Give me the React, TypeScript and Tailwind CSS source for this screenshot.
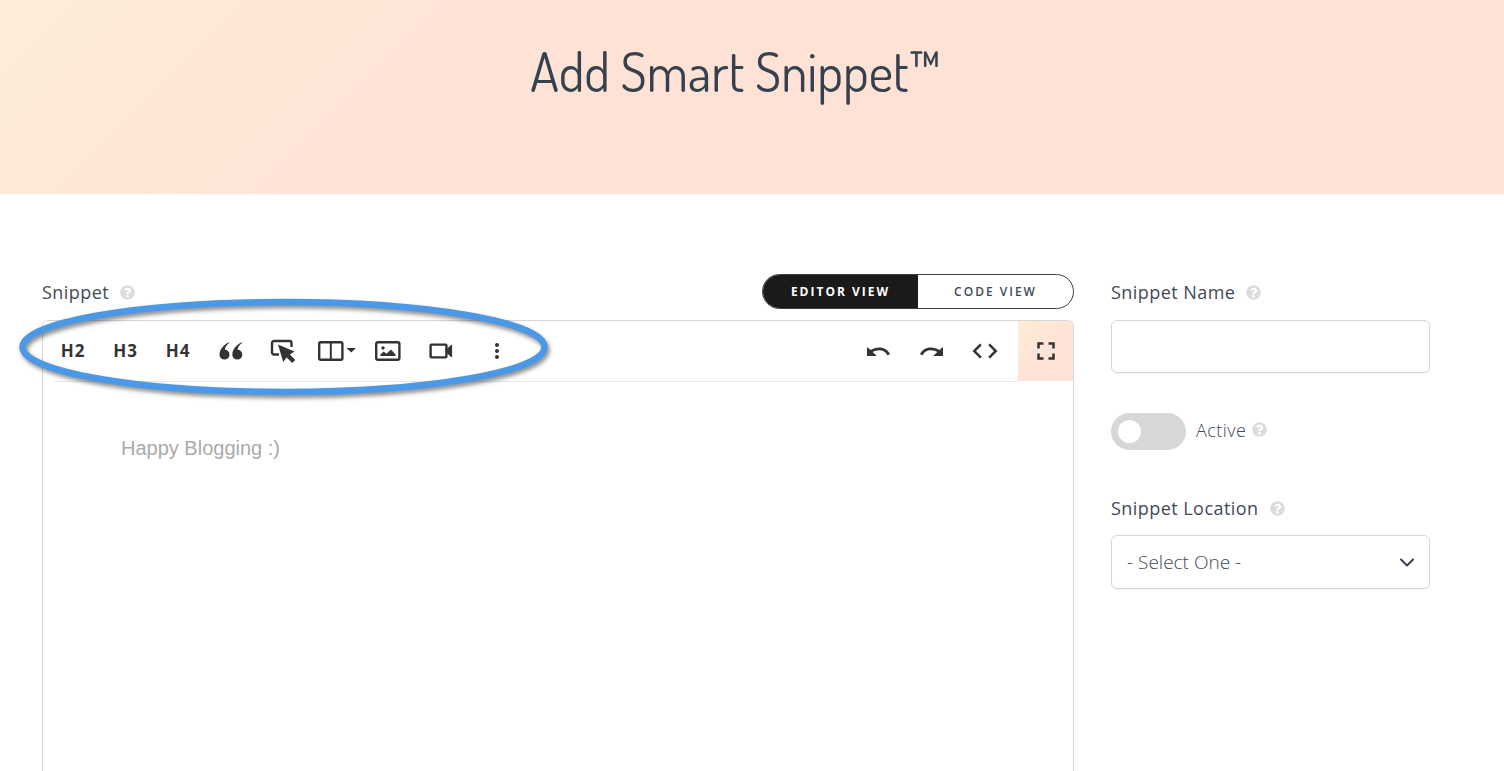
import { useState } from "react";
import type { ReactNode } from "react";
import { FaQuestionCircle } from "react-icons/fa";
import { MdCode, MdFullscreen, MdMoreVert } from "react-icons/md";

const QuoteIcon = () => (
  <svg width="24" height="18" viewBox="0 0 24 18" fill="currentColor">
    <path d="M10 .3C6.800 1.600 .5 6 .5 12.700a5 5 0 1 0 5.200-5.100c.5-2.600 2.200-5 4.700-6.800z" />
    <path d="M22.800 .3c-3.200 1.300-9.500 5.700-9.500 12.400a5 5 0 1 0 5.200-5.100c.5-2.600 2.200-5 4.700-6.800z" />
  </svg>
);

const ButtonIcon = () => (
  <svg width="26" height="24" viewBox="0 0 26 24" fill="none">
    <path d="M9 15.500H4A2 2 0 0 1 2 13.500V4A2 2 0 0 1 4 2H19.500A2 2 0 0 1 21.500 4V8" stroke="currentColor" strokeWidth="2.400" />
    <path d="M8 5.500l16.500 7-4.600 3 5.300 5.500-3 3-5.500-5.500-3.500 4.500z" fill="currentColor" />
  </svg>
);

const ColumnsIcon = () => (
  <svg width="38" height="20" viewBox="0 0 38 20" fill="none">
    <rect x="1.200" y="1.200" width="23.200" height="17.600" rx="1.500" stroke="currentColor" strokeWidth="2.400" />
    <path d="M12.800 1v18" stroke="currentColor" strokeWidth="2" />
    <path d="M28.500 7h9.500l-4.750 4.500z" fill="currentColor" />
  </svg>
);

const ImageIcon = () => (
  <svg width="26" height="20" viewBox="0 0 26 20" fill="none">
    <rect x="1.200" y="1.200" width="23.200" height="17.600" rx="1.800" stroke="currentColor" strokeWidth="2.400" />
    <circle cx="8" cy="7" r="1.700" fill="currentColor" />
    <path d="M5.500 15v-1.500l3-3 3 2.300 4.500-4.300 4.500 5V15z" fill="currentColor" />
  </svg>
);

const VideoIcon = () => (
  <svg width="24" height="16" viewBox="0 0 24 16" fill="none">
    <rect x="1.600" y="1.600" width="15.800" height="12.800" rx=".8" stroke="currentColor" strokeWidth="2.400" />
    <path d="M17.500 7l5-4.500v11l-5-4.500z" fill="currentColor" stroke="currentColor" strokeWidth="1.200" strokeLinejoin="round" />
  </svg>
);

const undoPath = "M0 0L3.600 3.100C6 1.300 8.900 .4 12.100 .4C17 .4 21.300 3 23 7.300L20.300 8.200C18.900 5 15.800 3.200 12.100 3.200C9.700 3.200 7.500 3.900 5.700 5.100L9.800 9H0Z";

const UndoIcon = () => (
  <svg width="23" height="9" viewBox="0 0 23 9" fill="currentColor">
    <path d={undoPath} />
  </svg>
);

const RedoIcon = () => (
  <svg width="23" height="9" viewBox="0 0 23 9" fill="currentColor">
    <path d={undoPath} transform="matrix(-1 0 0 1 23 0)" />
  </svg>
);

const textTools = [
  { name: "Heading 2", icon: "H2" },
  { name: "Heading 3", icon: "H3" },
  { name: "Heading 4", icon: "H4" },
  { name: "Quote", icon: <QuoteIcon /> },
  { name: "Button", icon: <ButtonIcon /> },
];

const historyTools = [
  { name: "Undo", icon: <UndoIcon /> },
  { name: "Redo", icon: <RedoIcon /> },
  { name: "Code", icon: <MdCode size={30} /> },
];

function ToolButton({ label, className, children }: { label: string; className: string; children: ReactNode }) {
  return (
    <button
      type="button"
      aria-label={label}
      className={`flex h-[60px] shrink-0 items-center justify-center text-[17px] font-bold tracking-[1px] ${className}`}
    >
      {children}
    </button>
  );
}

function Help() {
  return <FaQuestionCircle size={15} className="shrink-0 text-[#dcdcde]" />;
}

function FieldLabel({ htmlFor, children }: { htmlFor: string; children: ReactNode }) {
  return (
    <div className="flex h-6 items-center gap-[11px]">
      <label htmlFor={htmlFor} className="text-lg leading-6 tracking-wide">
        {children}
      </label>
      <Help />
    </div>
  );
}

export default function App() {
  const [view, setView] = useState("editor");
  const [active, setActive] = useState(false);

  return (
    <div className="flex min-h-screen flex-col bg-white font-['Open_Sans',sans-serif] text-[#414a57]">
      {/* Page header */}
      <header className="h-[194px] bg-[linear-gradient(135deg,#ffeed9_0%,#feead7_9%,#fde8d6_20%,#fee4d8_28%,#fde2d5_40%,#fde2d5_100%)] pt-[38px] pr-[74px] pl-[42px]">
        <h1 className="text-center font-['Dosis','Lato',sans-serif] text-[53px] leading-[68px] font-normal text-[#35414d]">
          Add Smart Snippet™
        </h1>
      </header>

      <main className="flex flex-1 gap-[37px] pt-20 pr-[74px] pl-[42px]">
        {/* Editor */}
        <section className="flex min-w-0 flex-1 flex-col">
          <div className="flex h-[46px] items-start justify-between">
            <div className="pt-[6px]">
              <FieldLabel htmlFor="snippet">Snippet</FieldLabel>
            </div>
            <div className="flex h-[35px] w-[312px] overflow-hidden rounded-full border border-[#35414d] text-xs tracking-[2px]">
              <button
                type="button"
                onClick={() => setView("editor")}
                className={`flex-1 ${view === "editor" ? "bg-[#1a1a1a] font-bold text-white" : "font-semibold"}`}
              >
                EDITOR VIEW
              </button>
              <button
                type="button"
                onClick={() => setView("code")}
                className={`flex-1 ${view === "code" ? "bg-[#1a1a1a] font-bold text-white" : "font-semibold"}`}
              >
                CODE VIEW
              </button>
            </div>
          </div>

          <div className="relative flex flex-1 flex-col rounded-t-md border border-b-0 border-[#d6d7d9]">
            <div className="flex justify-between text-[#333]">
              <div className="flex pl-1">
                <div className="flex w-[262px] justify-between">
                  {textTools.map((tool) => (
                    <ToolButton key={tool.name} label={tool.name} className="w-[52px]">
                      {tool.icon}
                    </ToolButton>
                  ))}
                </div>
                <ToolButton label="Columns" className="w-14">
                  <ColumnsIcon />
                </ToolButton>
                <ToolButton label="Image" className="w-[46px]">
                  <ImageIcon />
                </ToolButton>
                <ToolButton label="Video" className="w-[60px]">
                  <VideoIcon />
                </ToolButton>
                <ToolButton label="More" className="w-[52px]">
                  <MdMoreVert size={24} />
                </ToolButton>
              </div>
              <div className="flex">
                <div className="flex w-[166px] justify-between pr-[7px]">
                  {historyTools.map((tool) => (
                    <ToolButton key={tool.name} label={tool.name} className="w-[52px]">
                      {tool.icon}
                    </ToolButton>
                  ))}
                </div>
                <ToolButton
                  label="Fullscreen"
                  className="w-[55px] rounded-tr-md bg-[linear-gradient(135deg,#ffecd5_0%,#fee4d8_50%,#fde2d5_100%)]"
                >
                  <MdFullscreen size={30} />
                </ToolButton>
              </div>
            </div>
            <div className="mr-[55px] ml-3 border-t border-[#e8e8e8]" />
            <textarea
              id="snippet"
              placeholder="Happy Blogging :)"
              className="w-full flex-1 resize-none px-[78px] pt-[50px] font-['Liberation_Sans',Arial,sans-serif] text-xl leading-8 outline-none placeholder:text-[#aaa]"
            />

            {/* Highlight ring around the insert tools */}
            <svg
              className="pointer-events-none absolute -top-7 -left-7 drop-shadow-[2px_3px_2px_rgba(0,0,0,0.45)]"
              width="540"
              height="112"
              viewBox="0 0 540 112"
              fill="none"
            >
              <ellipse cx="268.500" cy="54" rx="261" ry="45" stroke="#4a98e6" strokeWidth="6.500" />
            </svg>
          </div>
        </section>

        {/* Settings */}
        <aside className="w-[319px] shrink-0 pt-[6px]">
          <FieldLabel htmlFor="snippet-name">Snippet Name</FieldLabel>
          <input
            id="snippet-name"
            type="text"
            className="mt-4 block h-[53px] w-full rounded-md border border-[#d6d7d9] px-4 text-lg shadow-xs outline-none"
          />

          <div className="mt-10 flex h-[37px] items-center">
            <input
              id="active"
              type="checkbox"
              role="switch"
              checked={active}
              onChange={() => setActive(!active)}
              className="h-[37px] w-[75px] shrink-0 appearance-none rounded-full bg-[#d6d7d9] before:mt-[7px] before:ml-[7px] before:block before:size-[23px] before:rounded-full before:bg-white checked:bg-[#1a1a1a] checked:before:ml-11"
            />
            <label htmlFor="active" className="mr-[6px] ml-[10px] pb-1 text-lg leading-6 font-light tracking-wide">
              Active
            </label>
            <div className="pb-1">
              <Help />
            </div>
          </div>

          <div className="mt-[46px]">
            <FieldLabel htmlFor="location">Snippet Location</FieldLabel>
          </div>
          <div className="relative mt-[15px]">
            <select
              id="location"
              className="block h-[54px] w-full appearance-none rounded-md border border-[#d6d7d9] bg-white px-[15px] text-[19px] font-light shadow-xs outline-none"
            >
              <option>- Select One -</option>
            </select>
            <svg
              className="pointer-events-none absolute top-5 right-4"
              width="14"
              height="14"
              viewBox="0 0 14 14"
              fill="none"
              stroke="#35414d"
              strokeWidth="2"
              strokeLinecap="round"
              strokeLinejoin="round"
            >
              <path d="M1 4.500l6 6 6-6" />
            </svg>
          </div>
        </aside>
      </main>
    </div>
  );
}
